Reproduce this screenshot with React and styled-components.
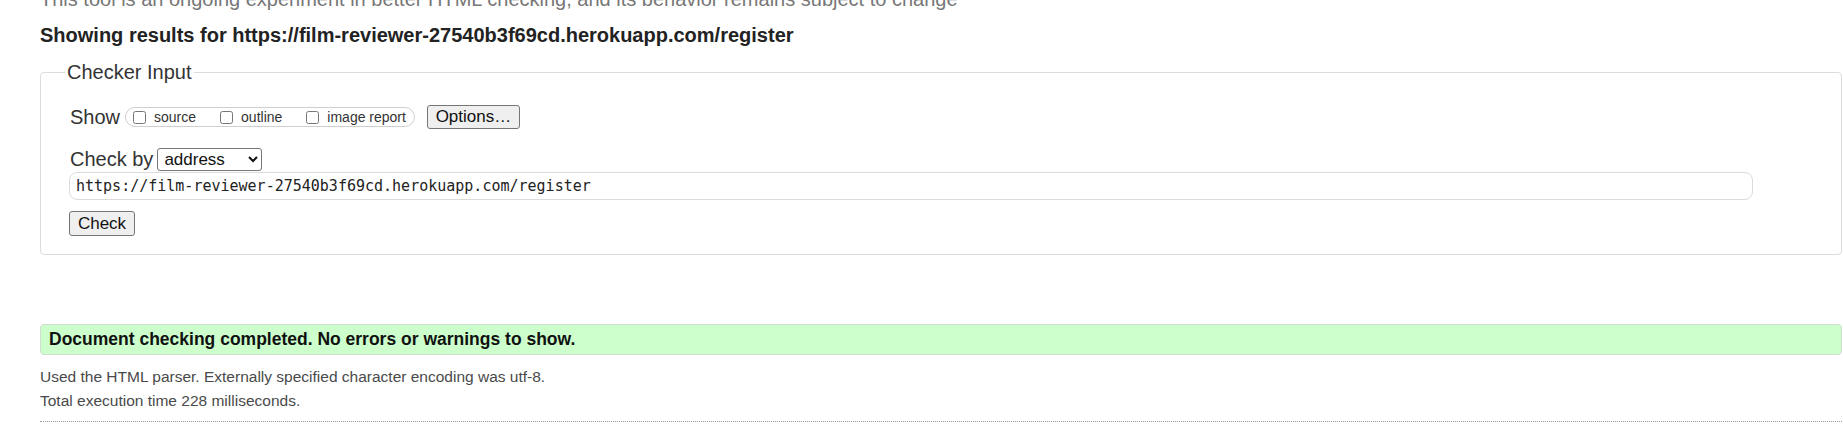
import React from "react";
import styled, { createGlobalStyle } from "styled-components";

const GlobalStyle = createGlobalStyle`
  body {
    margin: 0;
    background: #fff;
    font-family: "Liberation Sans", Arial, sans-serif;
    color: #222;
  }
`;

export default function App() {
  return (
    <>
      <GlobalStyle />
      <Page>
        <Intro>
          This tool is an ongoing experiment in better HTML checking, and its
          behavior remains subject to change
        </Intro>
        <Heading>
          Showing results for https://film-reviewer-27540b3f69cd.herokuapp.com/register
        </Heading>

        <Fieldset>
          <Legend>Checker Input</Legend>
          <ShowRow>
            <Label>Show</Label>
            <OptionGroup>
              <Option>
                <Checkbox type="checkbox" />
                source
              </Option>
              <Option>
                <Checkbox type="checkbox" />
                outline
              </Option>
              <Option last>
                <Checkbox type="checkbox" />
                image report
              </Option>
            </OptionGroup>
            <Button width={93} height={24}>Options…</Button>
          </ShowRow>

          <CheckByRow>
            <Label narrow>Check by</Label>
            <Select defaultValue="address">
              <option value="address">address</option>
              <option value="file">file upload</option>
              <option value="text">text input</option>
            </Select>
          </CheckByRow>

          <UrlInput
            type="text"
            defaultValue="https://film-reviewer-27540b3f69cd.herokuapp.com/register"
          />
          <SubmitRow>
            <Button width={66} height={25}>Check</Button>
          </SubmitRow>
        </Fieldset>

        <Success>Document checking completed. No errors or warnings to show.</Success>
        <Details>Used the HTML parser. Externally specified character encoding was utf-8.</Details>
        <Details second>Total execution time 228 milliseconds.</Details>
        <Rule />
      </Page>
    </>
  );
}

const Page = styled.div`
  padding: 0 1px 0 40px;
  height: 443px;
  overflow: hidden;
`;

const Intro = styled.p`
  margin: -12px 0 0;
  font-size: 20px;
  line-height: 23px;
  color: #777;
  white-space: nowrap;
`;

const Heading = styled.h2`
  margin: 13px 0 0;
  font-size: 20px;
  line-height: 23px;
  font-weight: bold;
  color: #222;
  white-space: nowrap;
`;

const Fieldset = styled.fieldset`
  margin: 14px 0 0;
  padding: 0 0 18px 29px;
  border: 1px solid #dcdcdc;
  border-radius: 4px;
`;

const Legend = styled.legend`
  margin-left: -5px;
  padding: 0 2px;
  font-size: 20px;
  line-height: 23px;
  color: #333;
`;

const ShowRow = styled.div`
  display: flex;
  align-items: center;
  height: 24px;
  margin-top: 21px;
`;

const Label = styled.span`
  font-size: 20px;
  line-height: 23px;
  color: #333;
  margin-right: ${(p) => (p.narrow ? "4px" : "5px")};
`;

const OptionGroup = styled.div`
  display: inline-flex;
  align-items: center;
  height: 20px;
  box-sizing: border-box;
  border: 1px solid #cfcfcf;
  border-radius: 10px;
  padding: 0 8px 0 7px;
  font-size: 14px;
  color: #333;
`;

const Option = styled.label`
  display: inline-flex;
  align-items: center;
  margin-right: ${(p) => (p.last ? "0" : "24px")};
`;

const Checkbox = styled.input`
  width: 13px;
  height: 13px;
  margin: 0 8px 0 0;
`;

const Button = styled.button`
  width: ${(p) => p.width}px;
  height: ${(p) => p.height}px;
  margin-left: ${(p) => (p.width === 93 ? "12px" : "0")};
  padding: 0;
  font-family: "Liberation Sans", Arial, sans-serif;
  font-size: 17px;
  color: #111;
  background: #efefef;
  border: 1px solid #767676;
  border-radius: 3px;
`;

const CheckByRow = styled.div`
  display: flex;
  align-items: center;
  margin-top: 19px;
  height: 23px;
`;

const Select = styled.select`
  width: 105px;
  height: 23px;
  font-family: "Liberation Sans", Arial, sans-serif;
  font-size: 17px;
  color: #111;
  background: #fff;
  border: 1px solid #767676;
  border-radius: 3px;
  padding: 0 2px;
`;

const UrlInput = styled.input`
  display: block;
  box-sizing: border-box;
  width: 1684px;
  height: 28px;
  margin: 1px 0 0 -1px;
  padding: 0 6px;
  border: 1px solid #dcdcdc;
  border-radius: 8px;
  font-family: "DejaVu Sans Mono", "Liberation Mono", monospace;
  font-size: 15px;
  color: #222;
  outline: none;
`;

const SubmitRow = styled.div`
  display: flex;
  margin: 11px 0 0 -1px;
`;

const Success = styled.div`
  margin-top: 69px;
  height: 31px;
  box-sizing: border-box;
  display: flex;
  align-items: center;
  padding-left: 8px;
  background: #ccffcc;
  border: 1px solid #cfdccf;
  border-radius: 4px;
  font-size: 17.5px;
  font-weight: bold;
  color: #111;
`;

const Details = styled.p`
  margin: ${(p) => (p.second ? "6px" : "13px")} 0 0;
  font-size: 15.5px;
  line-height: 18px;
  color: #4a4a4a;
`;

const Rule = styled.hr`
  margin: 11px 0 0;
  border: 0;
  border-top: 1px dotted #999;
`;
